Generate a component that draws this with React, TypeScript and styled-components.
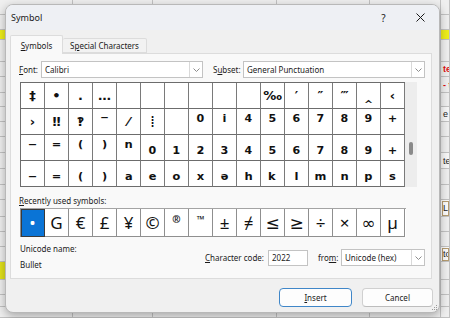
import React from 'react';
import styled, { createGlobalStyle } from 'styled-components';

type GlyphKind = 'normal' | 'sup' | 'sub' | 'thin';

type SheetRowData = {
  h: number;
  fill?: string;
  leftFill?: string;
  text?: string;
  color?: string;
  bold?: boolean;
  boxed?: boolean;
};

const GlobalStyle = createGlobalStyle`
  html, body {
    margin: 0;
    padding: 0;
  }
  body {
    width: 450px;
    height: 318px;
    overflow: hidden;
    background: #ececec;
    font-family: 'Noto Sans', 'DejaVu Sans', sans-serif;
    color: #1b1b1b;
  }
`;

const Desktop = styled.div`
  position: relative;
  width: 450px;
  height: 318px;
  overflow: hidden;
`;

/* spreadsheet behind the dialog */
const Sheet = styled.div`
  display: flex;
  flex-direction: column;
`;

const SheetRow = styled.div<{ $h: number }>`
  flex: none;
  display: flex;
  height: ${(p) => p.$h}px;
  overflow: hidden;
`;

const SheetCell = styled.div<{
  $w?: number;
  $fill?: string;
  $color?: string;
  $bold?: boolean;
  $boxed?: boolean;
}>`
  flex: ${(p) => (p.$w ? `0 0 ${p.$w}px` : '1')};
  box-sizing: border-box;
  border-right: 1px solid #c2c2c2;
  border-bottom: 1px solid #c2c2c2;
  background: ${(p) => p.$fill || '#efefef'};
  color: ${(p) => p.$color || '#222'};
  font-family: 'Liberation Sans', Arial, sans-serif;
  font-size: 9px;
  font-weight: ${(p) => (p.$bold ? 700 : 400)};
  display: flex;
  align-items: center;
  padding-left: 2px;
  white-space: nowrap;
  overflow: hidden;
  ${(p) => (p.$boxed ? 'outline: 1px solid #b69c70; outline-offset: -2px; background: #fbfbfb;' : '')}
`;

/* dialog window */
const Dialog = styled.div`
  position: absolute;
  left: 5px;
  top: 4px;
  width: 435px;
  height: 309px;
  box-sizing: border-box;
  border: 1px solid #b8b8b8;
  border-radius: 8px;
  background: #f0f0f0;
  box-shadow: 0 3px 10px rgba(0, 0, 0, 0.3);
  display: flex;
  flex-direction: column;
  overflow: hidden;
`;

const TitleBar = styled.div`
  flex: none;
  height: 25px;
  display: flex;
  align-items: center;
  padding-left: 5px;
  background: #eef0f4;
`;

const Title = styled.span`
  font-size: 9px;
  color: #1a1a1a;
`;

const TitleButton = styled.div`
  width: 37px;
  height: 25px;
  display: flex;
  align-items: center;
  justify-content: center;
  font-size: 10px;
  color: #1a1a1a;
  &:first-of-type {
    margin-left: auto;
  }
`;

const Tabs = styled.div`
  flex: none;
  height: 23px;
  display: flex;
  align-items: flex-end;
  padding-left: 4px;
`;

const Tab = styled.div<{ $active?: boolean }>`
  box-sizing: border-box;
  width: ${(p) => (p.$active ? 53 : 84)}px;
  height: ${(p) => (p.$active ? 19 : 15)}px;
  margin-bottom: ${(p) => (p.$active ? -1 : 0)}px;
  border: 1px solid #dcdcdc;
  border-bottom: ${(p) => (p.$active ? 'none' : '1px solid #dcdcdc')};
  border-left: ${(p) => (p.$active ? '1px solid #dcdcdc' : 'none')};
  border-radius: 2px 2px 0 0;
  background: ${(p) => (p.$active ? '#f9f9f9' : '#f2f2f2')};
  position: relative;
  z-index: ${(p) => (p.$active ? 1 : 0)};
  display: flex;
  align-items: center;
  justify-content: center;
  font-size: 8px;
  color: #1a1a1a;
`;

const U = styled.span`
  text-decoration: underline;
  text-underline-offset: 1px;
`;

const Panel = styled.div`
  flex: none;
  height: 226px;
  margin: 0 7px 0 4px;
  box-sizing: border-box;
  border: 1px solid #dcdcdc;
  background: #f9f9f9;
  padding: 7px 6px 0 8px;
  display: flex;
  flex-direction: column;
`;

const FieldRow = styled.div`
  display: flex;
  align-items: center;
  height: 17px;
`;

const Label = styled.span<{ $w?: number; $ml?: number }>`
  flex: none;
  width: ${(p) => (p.$w ? `${p.$w}px` : 'auto')};
  margin-left: ${(p) => p.$ml || 0}px;
  font-size: 8px;
  line-height: 12px;
  color: #1b1b1b;
  white-space: nowrap;
`;

const Combo = styled.div<{ $w: number; $h?: number }>`
  flex: none;
  width: ${(p) => p.$w}px;
  height: ${(p) => p.$h || 17}px;
  box-sizing: border-box;
  border: 1px solid #c3c3c3;
  background: #fff;
  display: flex;
  align-items: center;
`;

const ComboText = styled.span`
  flex: 1;
  padding-left: 3px;
  font-size: 8px;
  color: #1b1b1b;
  white-space: nowrap;
  overflow: hidden;
`;

const ComboArrow = styled.div`
  flex: none;
  width: 12px;
  height: 100%;
  border-left: 1px solid #d9d9d9;
  display: flex;
  align-items: center;
  justify-content: center;
`;

const GridArea = styled.div`
  display: flex;
  margin: 4px 0 0 1px;
`;

const CharGrid = styled.div`
  display: grid;
  grid-template-columns: repeat(16, 24px);
  grid-auto-rows: 26px;
  border-top: 1px solid #6c6c6c;
  border-left: 1px solid #6c6c6c;
  background: #fff;
`;

const CharCell = styled.div<{ $kind: GlyphKind }>`
  box-sizing: border-box;
  border-right: 1px solid #7a7a7a;
  border-bottom: 1px solid #6c6c6c;
  display: flex;
  align-items: center;
  justify-content: center;
  font-family: 'DejaVu Sans', 'Noto Sans', sans-serif;
  font-weight: ${(p) => (p.$kind === 'thin' ? 400 : 700)};
  font-size: ${(p) => (p.$kind === 'normal' ? 13 : p.$kind === 'thin' ? 16 : 18)}px;
  line-height: 25px;
  color: #111;
  overflow: hidden;
`;

const Scrollbar = styled.div`
  flex: none;
  width: 12px;
  height: 105px;
  background: #ededed;
  display: flex;
  justify-content: center;
  padding-top: 60px;
  box-sizing: border-box;
`;

const Thumb = styled.div`
  width: 4px;
  height: 13px;
  border-radius: 2px;
  background: #8a8a8a;
`;

const SectionLabel = styled(Label)`
  margin-top: 8px;
`;

const RecentRow = styled.div`
  display: grid;
  grid-template-columns: repeat(16, 24px);
  grid-auto-rows: 28px;
  margin: 1px 0 0 1px;
  width: 385px;
  border-top: 1px solid #a4a4a4;
  border-left: 1px solid #8f8f8f;
  background: #fff;
`;

const RecentCell = styled.div<{ $selected?: boolean; $small?: boolean }>`
  box-sizing: border-box;
  border-right: 1px solid #8f8f8f;
  border-bottom: 1px solid #8f8f8f;
  background: ${(p) => (p.$selected ? '#0a74d6' : '#fff')};
  color: ${(p) => (p.$selected ? '#fff' : '#111')};
  display: flex;
  align-items: ${(p) => (p.$small ? 'flex-start' : 'center')};
  padding-top: ${(p) => (p.$small ? 5 : 0)}px;
  justify-content: center;
  font-family: 'Noto Sans', 'DejaVu Sans', sans-serif;
  font-size: ${(p) => (p.$small ? 10 : 17)}px;
  font-weight: ${(p) => (p.$small ? 700 : 400)};
  line-height: 1;
  ${(p) => (p.$selected ? 'outline: 1px solid #3a3a3a; outline-offset: -1px;' : '')}
`;

const InfoRow = styled.div`
  display: flex;
  align-items: flex-start;
  margin: 6px 0 0 1px;
`;

const InfoColumn = styled.div`
  flex: 1;
  display: flex;
  flex-direction: column;
  gap: 4px;
`;

const CodeGroup = styled.div`
  flex: none;
  display: flex;
  align-items: center;
  margin-top: 6px;
`;

const CodeInput = styled.div`
  flex: none;
  width: 40px;
  height: 16px;
  box-sizing: border-box;
  border: 1px solid #c3c3c3;
  background: #fff;
  font-size: 8px;
  line-height: 14px;
  padding-left: 3px;
`;

const Footer = styled.div`
  flex: none;
  display: flex;
  justify-content: flex-end;
  gap: 10px;
  padding: 9px 6px 0 0;
`;

const Button = styled.div<{ $default?: boolean; $w: number }>`
  width: ${(p) => p.$w}px;
  height: 19px;
  box-sizing: border-box;
  border: 1px solid ${(p) => (p.$default ? '#3f86c8' : '#d0d0d0')};
  border-bottom-color: ${(p) => (p.$default ? '#3f86c8' : '#bdbdbd')};
  border-radius: 4px;
  background: #fdfdfd;
  display: flex;
  align-items: center;
  justify-content: center;
  font-size: 8px;
  color: #1b1b1b;
`;

const Grip = styled.svg`
  position: absolute;
  right: 1px;
  bottom: 1px;
`;

const sheetRows: SheetRowData[] = [
  { h: 15 },
  { h: 15 },
  { h: 10, fill: '#eeee1a', leftFill: '#eeee1a' },
  { h: 22 },
  { h: 15, text: 'te', color: '#e01010', bold: true },
  { h: 16, text: '- ta', color: '#e01010', bold: true },
  { h: 14 },
  { h: 15, text: 'e r', fill: '#f7f7f7' },
  { h: 15 },
  { h: 16 },
  { h: 16, text: 'te', fill: '#f7f7f7' },
  { h: 16 },
  { h: 15 },
  { h: 17, text: 'Lu', boxed: true },
  { h: 15 },
  { h: 15 },
  { h: 15, text: 'to', boxed: true },
  { h: 18, leftFill: '#e2e21c' },
  { h: 15 },
  { h: 12 },
  { h: 11 },
];

const sheetCols = [73, 80, 124, 93, 71];

const sup = (s: string) => s.split('').map((c) => ({ c, k: 'sup' as GlyphKind }));
const sub = (s: string) => s.split('').map((c) => ({ c, k: 'sub' as GlyphKind }));
const norm = (chars: string[]) => chars.map((c) => ({ c, k: 'normal' as GlyphKind }));

const gridChars: { c: string; k: GlyphKind }[] = [
  ...norm(['‡', '•', '․', '…', '', '', '', '', '', '', '‰', '′', '″', '‴', '‸', '‹']),
  ...norm(['›', '‼', '‽', '‾', '⁄']),
  { c: '⁞', k: 'thin' },
  { c: '', k: 'normal' },
  ...sup('⁰ⁱ⁴⁵⁶⁷⁸⁹⁺'),
  ...sup('⁻⁼⁽⁾ⁿ'),
  ...sub('₀₁₂₃₄₅₆₇₈₉₊'),
  ...sub('₋₌₍₎ₐₑₒₓₔₕₖₗₘₙₚₛ'),
];

const recent = ['•', 'G', '€', '£', '¥', '©', '®', '™', '±', '≠', '≤', '≥', '÷', '×', '∞', 'µ'];

const Chevron = () => (
  <svg width="7" height="4" viewBox="0 0 7 4">
    <path d="M0.5 0.5 L3.5 3.5 L6.5 0.5" fill="none" stroke="#8c8c8c" strokeWidth="1" />
  </svg>
);

const App = () => {
  return (
    <Desktop>
      <GlobalStyle />
      <Sheet>
        {sheetRows.map((row, i) => (
          <SheetRow key={i} $h={row.h}>
            {sheetCols.map((w, j) => (
              <SheetCell key={j} $w={w} $fill={j === 0 ? row.leftFill : row.fill} />
            ))}
            <SheetCell $fill={row.fill} $color={row.color} $bold={row.bold} $boxed={row.boxed}>
              {row.text}
            </SheetCell>
          </SheetRow>
        ))}
      </Sheet>

      <Dialog>
        <TitleBar>
          <Title>Symbol</Title>
          <TitleButton>?</TitleButton>
          <TitleButton>
            <svg width="9" height="9" viewBox="0 0 9 9">
              <path d="M0.5 0.5 L8.5 8.5 M8.5 0.5 L0.5 8.5" stroke="#1a1a1a" strokeWidth="1" />
            </svg>
          </TitleButton>
        </TitleBar>

        <Tabs>
          <Tab $active>
            <span>
              <U>S</U>ymbols
            </span>
          </Tab>
          <Tab>
            <span>
              S<U>p</U>ecial Characters
            </span>
          </Tab>
        </Tabs>

        <Panel>
          <FieldRow>
            <Label $w={22}>
              <U>F</U>ont:
            </Label>
            <Combo $w={162}>
              <ComboText>Calibri</ComboText>
              <ComboArrow>
                <Chevron />
              </ComboArrow>
            </Combo>
            <Label $w={30} $ml={10}>
              S<U>u</U>bset:
            </Label>
            <Combo $w={182}>
              <ComboText>General Punctuation</ComboText>
              <ComboArrow>
                <Chevron />
              </ComboArrow>
            </Combo>
          </FieldRow>

          <GridArea>
            <CharGrid>
              {gridChars.map((g, i) => (
                <CharCell key={i} $kind={g.k}>
                  {g.c}
                </CharCell>
              ))}
            </CharGrid>
            <Scrollbar>
              <Thumb />
            </Scrollbar>
          </GridArea>

          <SectionLabel>
            <U>R</U>ecently used symbols:
          </SectionLabel>
          <RecentRow>
            {recent.map((c, i) => (
              <RecentCell key={i} $selected={i === 0} $small={c === '®' || c === '™'}>
                {c}
              </RecentCell>
            ))}
          </RecentRow>

          <InfoRow>
            <InfoColumn>
              <Label>Unicode name:</Label>
              <Label>Bullet</Label>
            </InfoColumn>
            <CodeGroup>
              <Label $w={63}>
                <U>C</U>haracter code:
              </Label>
              <CodeInput>2022</CodeInput>
              <Label $w={23} $ml={10}>
                fro<U>m</U>:
              </Label>
              <Combo $w={84}>
                <ComboText>Unicode (hex)</ComboText>
                <ComboArrow>
                  <Chevron />
                </ComboArrow>
              </Combo>
            </CodeGroup>
          </InfoRow>
        </Panel>

        <Footer>
          <Button $default $w={73}>
            <span>
              <U>I</U>nsert
            </span>
          </Button>
          <Button $w={71}>Cancel</Button>
        </Footer>

        <Grip width="6" height="6" viewBox="0 0 6 6">
          <rect x="4" y="0" width="1" height="1" fill="#9a9a9a" />
          <rect x="2" y="2" width="1" height="1" fill="#9a9a9a" />
          <rect x="4" y="2" width="1" height="1" fill="#9a9a9a" />
          <rect x="0" y="4" width="1" height="1" fill="#9a9a9a" />
          <rect x="2" y="4" width="1" height="1" fill="#9a9a9a" />
          <rect x="4" y="4" width="1" height="1" fill="#9a9a9a" />
        </Grip>
      </Dialog>
    </Desktop>
  );
};

export default App;
